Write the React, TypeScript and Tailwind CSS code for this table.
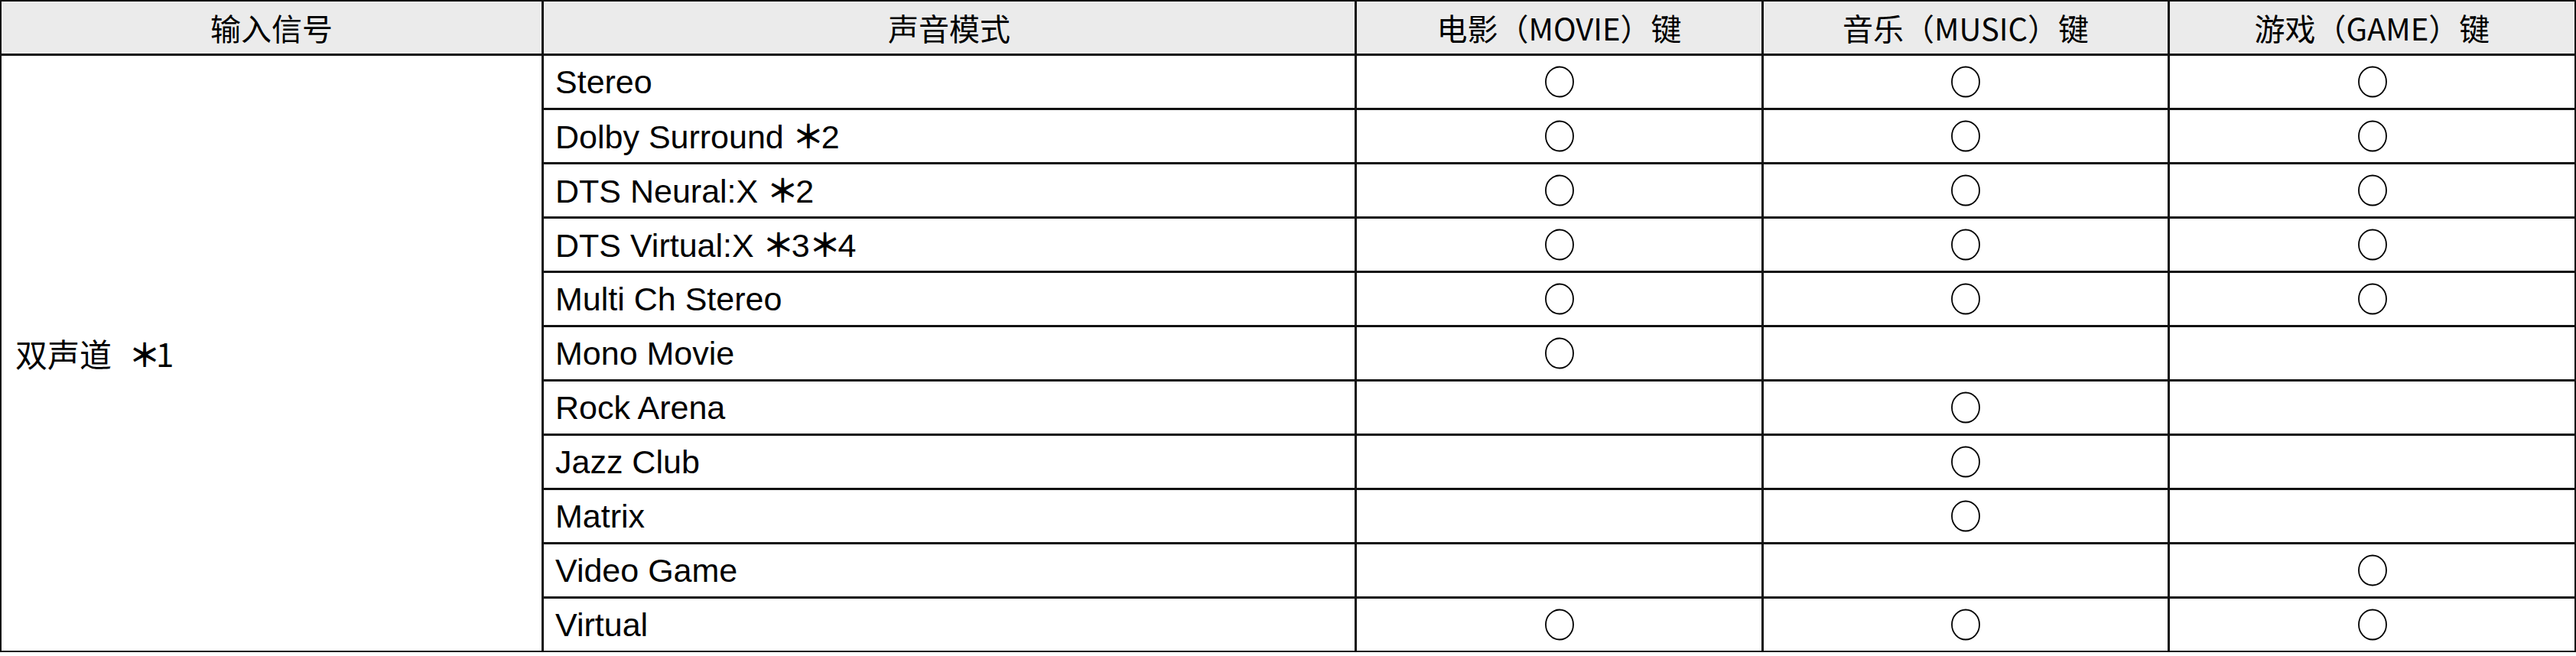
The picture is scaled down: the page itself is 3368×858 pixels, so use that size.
import React from "react";

const CJK = "font-['Noto_Sans_CJK_SC','Noto_Sans',sans-serif]";
const LAT = "font-['Liberation_Sans','Noto_Sans_CJK_SC',sans-serif]";

type Row = { name: React.ReactNode; m: boolean; u: boolean; g: boolean };

const Ast = () => (
  <span className="font-['Noto_Sans_CJK_SC',sans-serif] font-semibold text-[42px] ml-[-1px] mr-[-4px]">＊</span>
);

const rows: Row[] = [
  { name: "Stereo", m: true, u: true, g: true },
  { name: <>Dolby Surround <Ast />2</>, m: true, u: true, g: true },
  { name: <>DTS Neural:X <Ast />2</>, m: true, u: true, g: true },
  { name: <>DTS Virtual:X <Ast />3<Ast />4</>, m: true, u: true, g: true },
  { name: "Multi Ch Stereo", m: true, u: true, g: true },
  { name: "Mono Movie", m: true, u: false, g: false },
  { name: "Rock Arena", m: false, u: true, g: false },
  { name: "Jazz Club", m: false, u: true, g: false },
  { name: "Matrix", m: false, u: true, g: false },
  { name: "Video Game", m: false, u: false, g: true },
  { name: "Virtual", m: true, u: true, g: true },
];

const Circle = () => (
  <svg width="40" height="42" viewBox="0 0 40 42" className="block">
    <ellipse cx="20" cy="21" rx="18" ry="19.5" fill="none" stroke="#000" strokeWidth="1.8" />
  </svg>
);

const Mark = ({ on }: { on: boolean }) => (
  <div className="bg-white flex items-center justify-center">{on ? <Circle /> : null}</div>
);

const Head = ({ children }: { children: React.ReactNode }) => (
  <div className={`bg-[#ebebeb] flex items-center justify-center text-[40px] leading-none text-black ${CJK}`}>
    <span>{children}</span>
  </div>
);

export default function App() {
  return (
    <div className="w-[3368px] bg-white">
      <div className="grid grid-cols-[706px_1060px_529px_528px_529px] grid-rows-[repeat(12,68px)] gap-[3px] bg-[#111] p-[2px]">
        <Head>输入信号</Head>
        <Head>声音模式</Head>
        <Head>电影（MOVIE）键</Head>
        <Head>音乐（MUSIC）键</Head>
        <Head>游戏（GAME）键</Head>
        <div className={`col-start-1 row-start-2 row-span-11 bg-white flex items-center pl-[18px] text-[42px] leading-none text-black ${CJK}`}>
          <span>
            双声道<span className="ml-[22px] font-semibold">＊</span><span className="ml-[-6px]">1</span>
          </span>
        </div>
        {rows.map((r, i) => (
          <React.Fragment key={i}>
            <div className={`bg-white flex items-center pl-[15px] text-[43px] leading-none text-black whitespace-nowrap ${LAT}`}>
              <span>{r.name}</span>
            </div>
            <Mark on={r.m} />
            <Mark on={r.u} />
            <Mark on={r.g} />
          </React.Fragment>
        ))}
      </div>
    </div>
  );
}
